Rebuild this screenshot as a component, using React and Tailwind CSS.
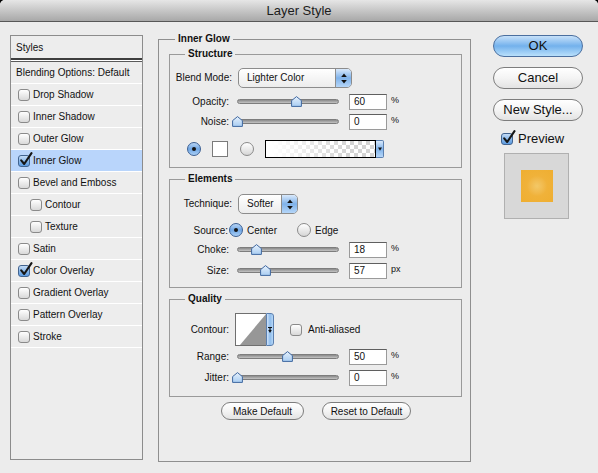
import React from "react";

function Check({ checked, className = "" }) {
  return (
    <span
      className={`relative inline-block w-[12px] h-[12px] shrink-0 rounded-[3px] border ${
        checked
          ? "border-[#41638f] bg-linear-to-b from-[#c4dcf6] via-[#8ab8ea] to-[#5c9be0]"
          : "border-[#8a8a8a] bg-linear-to-b from-white to-[#d9d9d9]"
      } ${className}`}
    >
      {checked && (
        <svg className="absolute left-[0px] top-[-4px]" width="14" height="15" viewBox="0 0 14 15">
          <path d="M2.2 8.3 L5.2 12 L12.5 1.2" fill="none" stroke="#161616" strokeWidth="2.1" strokeLinecap="round" strokeLinejoin="round" />
        </svg>
      )}
    </span>
  );
}

function Radio({ on }) {
  return (
    <span
      className={`flex items-center justify-center w-[14px] h-[14px] shrink-0 rounded-full border ${
        on
          ? "border-[#3b5f93] bg-linear-to-b from-[#b8d5f5] via-[#6fa6e4] to-[#a9cff6]"
          : "border-[#8a8a8a] bg-linear-to-b from-white to-[#d6d6d6]"
      }`}
    >
      {on && <span className="w-[4px] h-[4px] rounded-full bg-[#141414]" />}
    </span>
  );
}

function Slider({ pos }) {
  return (
    <div className="relative w-[102px] h-[11px] shrink-0">
      <div className="absolute left-0 right-0 top-[3px] h-[5px] rounded-full border border-[#7d7d7d] bg-linear-to-b from-[#8a8a8a] to-[#c4c4c4]" />
      <svg className="absolute top-0" style={{ left: pos - 5 }} width="11" height="11" viewBox="0 0 11 11">
        <defs>
          <linearGradient id="thumbg" x1="0" y1="0" x2="0" y2="1">
            <stop offset="0" stopColor="#e6f1fc" />
            <stop offset="1" stopColor="#a9cdf2" />
          </linearGradient>
        </defs>
        <path d="M5.5 0.6 L10.4 4.6 L10.4 10.4 L0.6 10.4 L0.6 4.6 Z" fill="url(#thumbg)" stroke="#3f679f" strokeWidth="1" strokeLinejoin="round" />
      </svg>
    </div>
  );
}

function Num({ v }) {
  return (
    <div className="w-[38px] h-[16px] shrink-0 bg-white border border-[#9a9a9a] border-t-[#5f5f5f] pl-[4px] text-[10px] leading-[14px]">
      {v}
    </div>
  );
}

function UpDown() {
  return (
    <svg width="6" height="11" viewBox="0 0 6 11">
      <path d="M3 0.5 L5.8 4 L0.2 4 Z" fill="#111" />
      <path d="M3 10.5 L5.8 7 L0.2 7 Z" fill="#111" />
    </svg>
  );
}

function Popup({ w, text }) {
  return (
    <div
      className={`flex h-[20px] shrink-0 rounded-[5px] border border-[#8c8c8c] bg-linear-to-b from-white to-[#ececec] overflow-hidden ${w}`}
    >
      <div className="flex-1 pl-[8px] text-[10px] leading-[18px]">{text}</div>
      <div className="w-[16px] flex items-center justify-center border-l border-[#8c8c8c] bg-linear-to-b from-[#d9e9fb] via-[#7fb2ea] to-[#b5d6f8]">
        <UpDown />
      </div>
    </div>
  );
}

function Box({ title, h, children }) {
  return (
    <div className={`relative w-[293px] border border-[#9a9a9a] shrink-0 ${h}`}>
      <div className="absolute left-[15px] top-[-7px] px-[3px] bg-[#ececec] text-[10px] font-bold leading-[12px]">
        {title}
      </div>
      {children}
    </div>
  );
}

function Row({ label, lw = "w-[59px]", gap = "gap-[8px]", className = "", children }) {
  return (
    <div className={`flex items-center ${gap} ${className}`}>
      <div className={`${lw} shrink-0 text-right text-[10px] leading-[12px]`}>{label}</div>
      {children}
    </div>
  );
}

function SliderRow({ label, pos, value, unit, className }) {
  return (
    <Row label={label} className={`h-[17px] ${className}`}>
      <Slider pos={pos} />
      <div className="ml-[2px]">
        <Num v={value} />
      </div>
      <div className="ml-[-4px] text-[9px] leading-[12px] self-start pt-[1px]">{unit}</div>
    </Row>
  );
}

function AquaButton({ children, primary, className = "" }) {
  return (
    <div
      className={`flex items-center justify-center rounded-full border ${
        primary
          ? "border-[#4b6f9f] bg-linear-to-b from-[#c7e1f9] via-[#73b1ec] to-[#b9e0fb]"
          : "border-[#7d7d7d] bg-linear-to-b from-white via-[#f4f4f4] to-[#e3e3e3]"
      } ${className}`}
    >
      {children}
    </div>
  );
}

const items = [
  { t: "Drop Shadow" },
  { t: "Inner Shadow" },
  { t: "Outer Glow" },
  { t: "Inner Glow", c: true, sel: true },
  { t: "Bevel and Emboss" },
  { t: "Contour", ind: true },
  { t: "Texture", ind: true },
  { t: "Satin" },
  { t: "Color Overlay", c: true },
  { t: "Gradient Overlay" },
  { t: "Pattern Overlay" },
  { t: "Stroke" },
];

export default function App() {
  return (
    <div className="w-[598px] h-[473px] bg-black text-[#111] font-[family-name:'Liberation_Sans',Arial,sans-serif]">
      <div className="w-full h-full rounded-t-[5px] overflow-hidden bg-[#ececec] flex flex-col">
        <div className="h-[22px] shrink-0 border-b border-[#575757] bg-linear-to-b from-[#e6e6e6] to-[#a8a8a8] flex items-center justify-center text-[13px] leading-[16px] text-[#1c1c1c]">
          Layer Style
        </div>
        <div className="flex flex-1">
          {/* Left list */}
          <div className="ml-[10px] mt-[13px] w-[133px] h-[425px] border border-[#8c8c8c] bg-[#ededed] flex flex-col text-[10px] shrink-0">
            <div className="h-[22px] pl-[5px] flex items-center">Styles</div>
            <div className="h-[2px] bg-[#3e3e3e]" />
            <div className="h-[1px] bg-white" />
            <div className="h-[1px] bg-[#5a5a5a]" />
            <div className="h-[22px] pl-[5px] flex items-center border-b border-white">Blending Options: Default</div>
            {items.map((it) => (
              <div
                key={it.t}
                className={`h-[22px] flex items-center gap-[3px] border-b border-white ${it.ind ? "pl-[19px]" : "pl-[7px]"} ${
                  it.sel ? "bg-[#b9d5fb]" : ""
                }`}
              >
                <Check checked={it.c} />
                <span>{it.t}</span>
              </div>
            ))}
          </div>

          {/* Main */}
          <div className="relative ml-[15px] mt-[17px] w-[313px] h-[423px] border border-[#8f8f8f] shrink-0 flex flex-col pl-[10px] pt-[14px]">
            <div className="absolute left-[16px] top-[-7px] px-[3px] bg-[#ececec] text-[10px] font-bold leading-[12px]">
              Inner Glow
            </div>

            <Box title="Structure" h="h-[114px]">
              <div className="flex flex-col">
                <Row label="Blend Mode:" lw="w-[62px]" gap="gap-[6px]" className="mt-[13px] h-[20px]">
                  <Popup w="w-[114px]" text="Lighter Color" />
                </Row>
                <SliderRow label="Opacity:" pos={59} value="60" unit="%" className="mt-[5px]" />
                <SliderRow label="Noise:" pos={0} value="0" unit="%" className="mt-[3px]" />
                <div className="mt-[9px] h-[20px] flex items-center pl-[17px]">
                  <Radio on />
                  <div className="ml-[11px] w-[16px] h-[16px] bg-white border border-[#7a7a7a]" />
                  <div className="ml-[12px]">
                    <Radio />
                  </div>
                  <div className="ml-[11px] flex h-[18px]">
                    <div className="w-[111px] h-full border border-black bg-[image:linear-gradient(to_right,#ffffff_5%,rgba(255,255,255,0)_75%),repeating-conic-gradient(#d4d4d4_0%_25%,#ffffff_0%_50%)] bg-[length:100%_100%,8px_8px]" />
                    <div className="w-[8px] h-full flex items-center justify-center border border-l-0 border-[#5b7fae] rounded-r-[2px] bg-linear-to-b from-[#d9e9fb] via-[#7fb2ea] to-[#b5d6f8]">
                      <svg width="4" height="4" viewBox="0 0 4 4">
                        <path d="M0 0.5 L4 0.5 L2 3.8 Z" fill="#111" />
                      </svg>
                    </div>
                  </div>
                </div>
              </div>
            </Box>

            <div className="mt-[11px]">
              <Box title="Elements" h="h-[109px]">
                <div className="flex flex-col">
                  <Row label="Technique:" lw="w-[62px]" gap="gap-[6px]" className="mt-[14px] h-[20px]">
                    <Popup w="w-[60px]" text="Softer" />
                  </Row>
                  <div className="mt-[9px] h-[14px] flex items-center text-[10px]">
                    <div className="w-[58px] text-right">Source:</div>
                    <div className="ml-[1px]">
                      <Radio on />
                    </div>
                    <span className="ml-[4px]">Center</span>
                    <div className="ml-[20px]">
                      <Radio />
                    </div>
                    <span className="ml-[4px]">Edge</span>
                  </div>
                  <SliderRow label="Choke:" pos={19} value="18" unit="%" className="mt-[4px]" />
                  <SliderRow label="Size:" pos={28} value="57" unit="px" className="mt-[4px]" />
                </div>
              </Box>
            </div>

            <div className="mt-[11px]">
              <Box title="Quality" h="h-[98px]">
                <div className="flex flex-col">
                  <Row label="Contour:" gap="gap-[6px]" className="mt-[13px] h-[33px]">
                    <div className="flex h-[33px] shrink-0">
                      <div className="w-[31px] h-full border border-[#6f6f6f] border-r-0 bg-white">
                        <svg width="30" height="31" viewBox="0 0 30 31" className="block">
                          <path d="M4 31 L30 0 L30 31 Z" fill="#979797" />
                        </svg>
                      </div>
                      <div className="w-[8px] h-full flex items-center justify-center border border-[#5b7fae] rounded-r-[3px] bg-linear-to-r from-[#cfe3fa] via-[#8ebcec] to-[#b6d7f7]">
                        <svg width="4" height="6" viewBox="0 0 4 6">
                          <path d="M0 0 L4 0 L4 1 L2.6 1 L2.6 3 L3.8 3 L2 6 L0.2 3 L1.4 3 L1.4 1 L0 1 Z" fill="#111" />
                        </svg>
                      </div>
                    </div>
                    <div className="ml-[10px] flex items-center gap-[6px] text-[10px]">
                      <Check />
                      <span>Anti-aliased</span>
                    </div>
                  </Row>
                  <SliderRow label="Range:" pos={50} value="50" unit="%" className="mt-[2px]" />
                  <SliderRow label="Jitter:" pos={0} value="0" unit="%" className="mt-[4px]" />
                </div>
              </Box>
            </div>

            <div className="mt-[5px] ml-[52px] flex gap-[18px] text-[10px]">
              <AquaButton className="w-[83px] h-[18px]">Make Default</AquaButton>
              <AquaButton className="w-[89px] h-[18px]">Reset to Default</AquaButton>
            </div>
          </div>

          {/* Right column */}
          <div className="ml-[22px] mt-[13px] w-[90px] flex flex-col shrink-0 text-[13px]">
            <AquaButton primary className="h-[22px]">OK</AquaButton>
            <AquaButton className="mt-[10px] h-[22px]">Cancel</AquaButton>
            <AquaButton className="mt-[10px] h-[22px]">New Style...</AquaButton>
            <div className="mt-[11px] ml-[8px] h-[14px] flex items-center gap-[5px]">
              <Check checked />
              <span className="leading-[14px]">Preview</span>
            </div>
            <div className="mt-[7px] ml-[11px] w-[65px] h-[66px] border border-[#b0b0b0] bg-[#d8d8d8] flex items-center justify-center">
              <div className="w-[32px] h-[32px] bg-radial from-[#f3c867] from-0% via-[#f0b23a] via-45% to-[#efae30] to-100%" />
            </div>
          </div>
        </div>
      </div>
    </div>
  );
}
